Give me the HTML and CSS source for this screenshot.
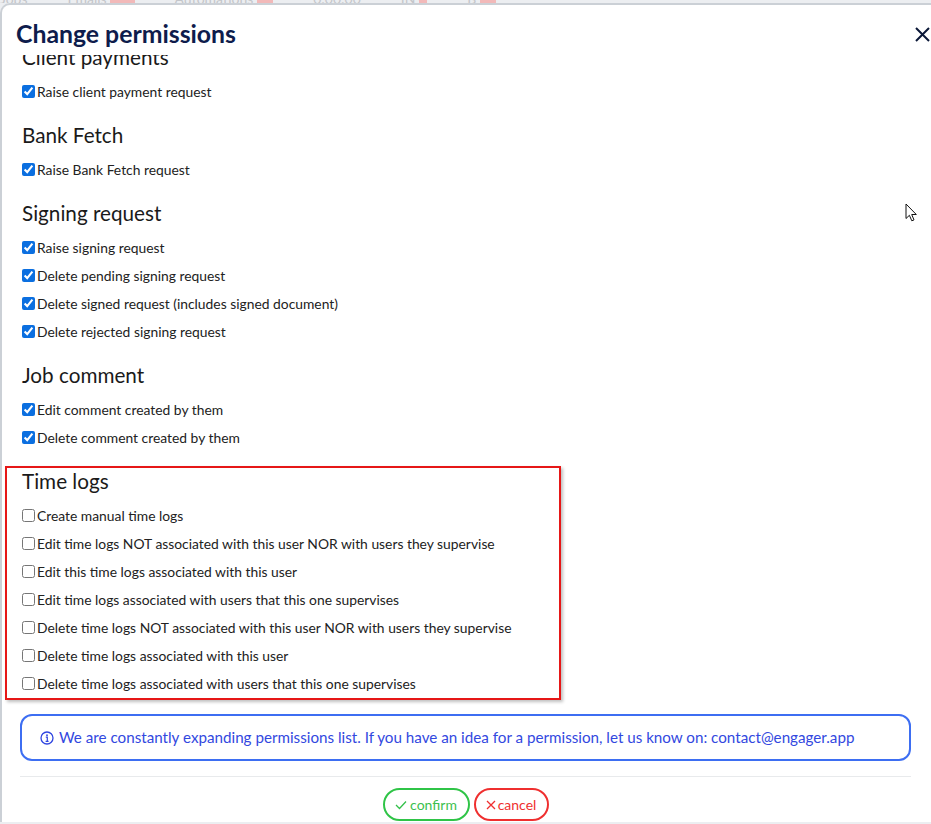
FILE: index.html
```html
<!DOCTYPE html>
<html lang="en">
<head>
<meta charset="utf-8">
<title>Change permissions</title>
<link rel="stylesheet" href="styles.css">
</head>
<body>
<div class="topbar">
  <span>Jobs</span><span>Emails <b class="badge">201</b></span><span>Automations <b class="badge">37</b></span><span>0:00:00</span><span>IN <b class="badge">4</b></span><span>B <b class="badge">29</b></span>
</div>
<div class="modal">
  <div class="modal-header">
    <h1 class="modal-title">Change permissions</h1>
    <button class="close" aria-label="Close">
      <svg width="15" height="15" viewBox="0 0 15 15"><path d="M1 1 L14 14 M14 1 L1 14" stroke="#0b1838" stroke-width="2" fill="none"/></svg>
    </button>
  </div>
  <div class="modal-body">
    <div class="content">
      <section class="group">
        <h2 class="group-title">Client payments</h2>
        <label class="row"><input type="checkbox" checked><span>Raise client payment request</span></label>
      </section>
      <section class="group">
        <h2 class="group-title">Bank Fetch</h2>
        <label class="row"><input type="checkbox" checked><span>Raise Bank Fetch request</span></label>
      </section>
      <section class="group">
        <h2 class="group-title">Signing request</h2>
        <label class="row"><input type="checkbox" checked><span>Raise signing request</span></label>
        <label class="row"><input type="checkbox" checked><span>Delete pending signing request</span></label>
        <label class="row"><input type="checkbox" checked><span>Delete signed request (includes signed document)</span></label>
        <label class="row"><input type="checkbox" checked><span>Delete rejected signing request</span></label>
      </section>
      <section class="group">
        <h2 class="group-title">Job comment</h2>
        <label class="row"><input type="checkbox" checked><span>Edit comment created by them</span></label>
        <label class="row"><input type="checkbox" checked><span>Delete comment created by them</span></label>
      </section>
      <section class="group highlighted">
        <h2 class="group-title">Time logs</h2>
        <label class="row"><input type="checkbox"><span>Create manual time logs</span></label>
        <label class="row"><input type="checkbox"><span>Edit time logs NOT associated with this user NOR with users they supervise</span></label>
        <label class="row"><input type="checkbox"><span>Edit this time logs associated with this user</span></label>
        <label class="row"><input type="checkbox"><span>Edit time logs associated with users that this one supervises</span></label>
        <label class="row"><input type="checkbox"><span>Delete time logs NOT associated with this user NOR with users they supervise</span></label>
        <label class="row"><input type="checkbox"><span>Delete time logs associated with this user</span></label>
        <label class="row"><input type="checkbox"><span>Delete time logs associated with users that this one supervises</span></label>
        <div class="annotation"></div>
      </section>
      <div class="info">
        <svg class="info-icon" width="14" height="14" viewBox="0 0 14 14"><circle cx="7" cy="7" r="6" stroke="#2f45e0" stroke-width="1.3" fill="none"/><circle cx="7" cy="4.2" r="0.9" fill="#2f45e0"/><path d="M5.8 6.2 H7.3 V10.2 M5.6 10.3 H8.6" stroke="#2f45e0" stroke-width="1.2" fill="none"/></svg>
        <span>We are constantly expanding permissions list. If you have an idea for a permission, let us know on: contact@engager.app</span>
      </div>
      <hr class="divider">
      <div class="actions">
        <button class="btn btn-confirm"><svg width="12" height="10" viewBox="0 0 12 10"><path d="M1 5 L4.5 8.5 L11 1.5" stroke="#34c04a" stroke-width="1.3" fill="none"/></svg> confirm</button>
        <button class="btn btn-cancel"><svg width="10" height="10" viewBox="0 0 10 10"><path d="M1 1 L9 9 M9 1 L1 9" stroke="#ef2f2f" stroke-width="1.3" fill="none"/></svg>cancel</button>
      </div>
    </div>
  </div>
  <svg class="cursor" width="13" height="20" viewBox="0 0 13 20"><path d="M1 1 L1 15.5 L4.4 12.3 L6.8 17.8 L9 16.9 L6.7 11.5 L11.3 11.5 Z" fill="#fff" stroke="#111" stroke-width="1" stroke-linejoin="round"/></svg>
</div>
</body>
</html>
```
FILE: styles.css
```css
html, body {
  margin: 0;
  padding: 0;
  overflow: hidden;
  height: 824px;
}
body {
  background: #eceef1;
  font-family: Lato, "Open Sans", sans-serif;
  color: #212529;
}
.topbar {
  height: 3px;
  overflow: hidden;
  display: flex;
  gap: 40px;
  font-size: 14px;
  line-height: 10px;
  color: #c4c6ca;
  white-space: nowrap;
}
.topbar span {
  margin-top: -6px;
}
.topbar .badge {
  background: #f2b9b9;
  color: #f2b9b9;
  font-weight: 400;
}
.modal {
  position: relative;
  width: 951px;
  height: 819px;
  box-sizing: border-box;
  background: #fff;
  border-top: 2px solid #cbd0d6;
  border-left: 2px solid #cbd0d6;
  border-top-left-radius: 10px;
}
.modal-header {
  height: 50px;
  box-sizing: border-box;
  padding: 14px 21px 0 14px;
  display: flex;
  justify-content: space-between;
  align-items: flex-start;
}
.modal-title {
  margin: 0;
  font-size: 24.8px;
  line-height: 29px;
  font-weight: 700;
  color: #0e1c4c;
}
.close {
  border: 0;
  background: none;
  padding: 0;
  margin-top: 8px;
  width: 15px;
  height: 15px;
  display: flex;
}
.modal-body {
  height: 769px;
  overflow: hidden;
  padding: 0 40px 0 18px;
}
.content {
  margin-top: -11px;
}
.group {
  padding-left: 2px;
  position: relative;
}
.group + .group .group-title {
  margin-top: 17px;
}
.group-title {
  margin: 0 0 7px 0;
  height: 26px;
  line-height: 26px;
  font-size: 20.7px;
  font-weight: 400;
  color: #1a1a1a;
}
.row {
  display: flex;
  align-items: center;
  gap: 2px;
  height: 28px;
  font-size: 13.85px;
  color: #222;
}
.row input {
  margin: 0;
  width: 13px;
  height: 13px;
  accent-color: #0b6fe0;
}
.annotation {
  position: absolute;
  left: -15px;
  top: -2px;
  width: 556px;
  bottom: -3px;
  box-sizing: border-box;
  border: 2px solid #e61717;
  box-shadow: 2px 2px 3px rgba(0, 0, 0, 0.25);
  pointer-events: none;
}
.info {
  margin-top: 17px;
  border: 2px solid #3d6ef2;
  border-radius: 12px;
  padding: 11px 18px;
  display: flex;
  align-items: center;
  gap: 5px;
  font-size: 15.2px;
  line-height: 21px;
  color: #3248e0;
}
.info-icon {
  flex: none;
}
.divider {
  margin: 15px 0 0 0;
  border: 0;
  border-top: 1px solid #e8eaec;
  height: 0;
}
.actions {
  margin-top: 11px;
  display: flex;
  justify-content: center;
  gap: 4px;
}
.btn {
  height: 33px;
  box-sizing: border-box;
  border-radius: 17px;
  background: #fff;
  font-family: Lato, "Open Sans", sans-serif;
  font-size: 14px;
  display: flex;
  align-items: center;
  gap: 3px;
  padding: 0 10px;
  cursor: pointer;
}
.btn-confirm {
  border: 2px solid #2fc447;
  color: #3cbf4e;
  width: 87px;
  justify-content: center;
}
.btn-cancel {
  border: 2px solid #ef2f2f;
  color: #ef2f2f;
  width: 75px;
  justify-content: center;
  gap: 2px;
}
.cursor {
  position: absolute;
  left: 903px;
  top: 198px;
}
```
